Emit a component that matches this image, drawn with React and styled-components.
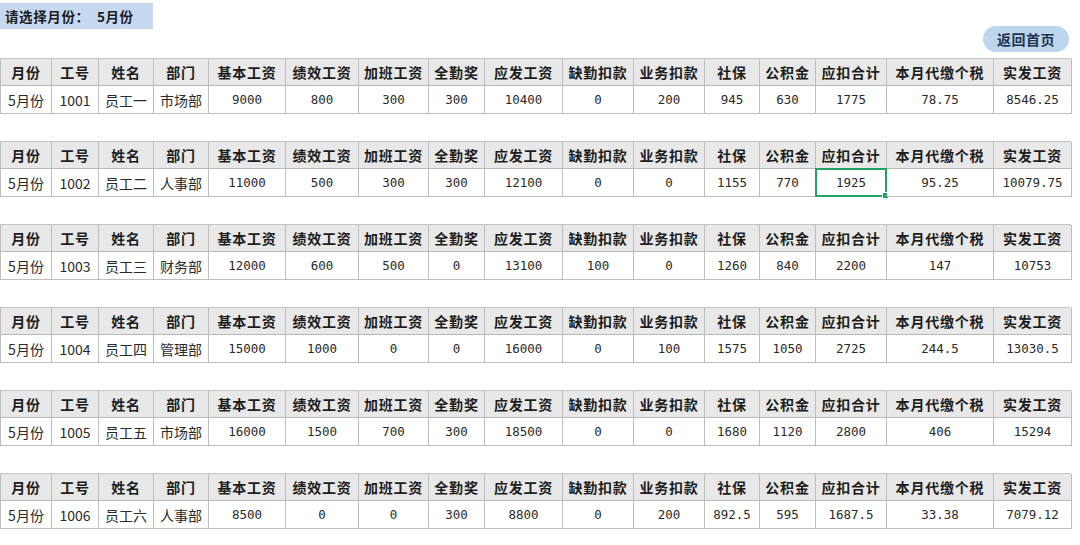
import React from "react";
import styled, { createGlobalStyle } from "styled-components";

const Global = createGlobalStyle`
  html, body { margin: 0; padding: 0; background: #ffffff; }
  body { font-family: "Noto Sans CJK SC", "Noto Sans", sans-serif; color: #222; }
`;

const COLS = [51, 47, 55, 55, 77, 73, 70, 56, 78, 71, 71, 55, 56, 71, 107, 78];
const HEAD = ["月份", "工号", "姓名", "部门", "基本工资", "绩效工资", "加班工资", "全勤奖", "应发工资", "缺勤扣款", "业务扣款", "社保", "公积金", "应扣合计", "本月代缴个税", "实发工资"];

const ROWS = [
  ["5月份", "1001", "员工一", "市场部", "9000", "800", "300", "300", "10400", "0", "200", "945", "630", "1775", "78.75", "8546.25"],
  ["5月份", "1002", "员工二", "人事部", "11000", "500", "300", "300", "12100", "0", "0", "1155", "770", "1925", "95.25", "10079.75"],
  ["5月份", "1003", "员工三", "财务部", "12000", "600", "500", "0", "13100", "100", "0", "1260", "840", "2200", "147", "10753"],
  ["5月份", "1004", "员工四", "管理部", "15000", "1000", "0", "0", "16000", "0", "100", "1575", "1050", "2725", "244.5", "13030.5"],
  ["5月份", "1005", "员工五", "市场部", "16000", "1500", "700", "300", "18500", "0", "0", "1680", "1120", "2800", "406", "15294"],
  ["5月份", "1006", "员工六", "人事部", "8500", "0", "0", "300", "8800", "0", "200", "892.5", "595", "1687.5", "33.38", "7079.12"],
];

const Page = styled.div`
  width: 1080px;
  height: 545px;
  overflow: hidden;
`;

const Header = styled.div`
  display: flex;
  justify-content: space-between;
  align-items: flex-start;
  padding-right: 11px;
`;

const MonthPicker = styled.div`
  margin-top: 3px;
  width: 153px;
  height: 26px;
  box-sizing: border-box;
  padding-left: 5px;
  background: #c6d9f0;
  display: flex;
  align-items: center;
  font-size: 13.5px;
  font-weight: 700;
  color: #1b1b1b;
  letter-spacing: 0.6px;
  white-space: pre;
`;

const HomeButton = styled.button`
  margin-top: 26px;
  width: 86px;
  height: 26px;
  border: none;
  border-radius: 13px;
  background: #bcd6ee;
  color: #1e3350;
  font-family: "Noto Sans CJK SC", sans-serif;
  font-size: 14px;
  font-weight: 700;
  letter-spacing: 0.5px;
  padding: 0;
  cursor: pointer;
`;

const Tables = styled.div`
  margin-top: 6px;
  display: flex;
  flex-direction: column;
  gap: 27px;
`;

const Grid = styled.div`
  display: grid;
  grid-template-columns: ${COLS.map((w) => w + "px").join(" ")};
  grid-template-rows: 27px 28px;
  width: 1071px;
  box-sizing: border-box;
  border-left: 1px solid #bdbdbd;
  border-top: 1px solid #c4c4c4;
`;

const Cell = styled.div`
  position: relative;
  box-sizing: border-box;
  border-right: 1px solid #bdbdbd;
  border-bottom: 1px solid ${(p) => (p.$head ? "#b8b8b8" : "#bdbdbd")};
  background: ${(p) => (p.$head ? "#e8e8e8" : "#ffffff")};
  display: flex;
  align-items: center;
  justify-content: center;
  white-space: nowrap;
  color: ${(p) => (p.$head ? "#1c1c1c" : "#2a2a2a")};
  font-family: ${(p) =>
    p.$mono ? '"DejaVu Sans Mono", "Noto Sans CJK SC", monospace' : '"Noto Sans CJK SC", "Noto Sans", sans-serif'};
  font-size: ${(p) => (p.$head ? "14px" : p.$mono ? "12.5px" : "14px")};
  font-weight: ${(p) => (p.$head ? 700 : 400)};
  letter-spacing: ${(p) => (p.$head ? "0.8px" : "0")};
`;

const Selection = styled.div`
  position: absolute;
  left: -1px;
  top: -1px;
  right: -1px;
  bottom: -1px;
  border: 2px solid #21a366;
  pointer-events: none;
  &::after {
    content: "";
    position: absolute;
    right: -4px;
    bottom: -4px;
    width: 5px;
    height: 5px;
    background: #21a366;
    border: 1px solid #fff;
  }
`;

function SalaryTable({ row, selectedCol }) {
  return (
    <Grid>
      {HEAD.map((h) => (
        <Cell key={h} $head>
          {h}
        </Cell>
      ))}
      {row.map((v, i) => (
        <Cell key={i} $mono={i >= 4}>
          {v}
          {selectedCol === i && <Selection />}
        </Cell>
      ))}
    </Grid>
  );
}

export default function App() {
  return (
    <Page>
      <Global />
      <Header>
        <MonthPicker>{"请选择月份：  5月份"}</MonthPicker>
        <HomeButton>返回首页</HomeButton>
      </Header>
      <Tables>
        {ROWS.map((r, i) => (
          <SalaryTable key={i} row={r} selectedCol={i === 1 ? 13 : -1} />
        ))}
      </Tables>
    </Page>
  );
}
